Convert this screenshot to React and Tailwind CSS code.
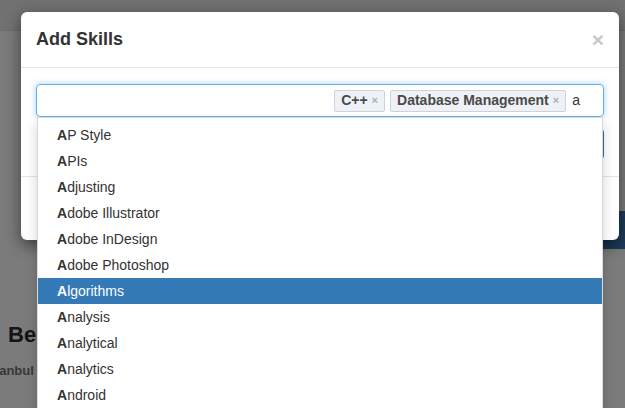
import { useState } from "react";

const skills = [
  "AP Style",
  "APIs",
  "Adjusting",
  "Adobe Illustrator",
  "Adobe InDesign",
  "Adobe Photoshop",
  "Algorithms",
  "Analysis",
  "Analytical",
  "Analytics",
  "Android",
  "Angular",
];

function Tag({ label }) {
  return (
    <span className="flex items-center h-[22px] px-[6px] gap-[4px] bg-[#eef1f5] border border-[#cdd4dd] rounded-[2px] text-[14px] font-bold text-[#4a4a4a]">
      {label}
      <span className="text-[11px] font-bold text-[#a9b0b8]">×</span>
    </span>
  );
}

export default function App() {
  const [active] = useState(6);

  return (
    <div className="relative w-[625px] h-[408px] overflow-hidden bg-[#f6f6f6] font-['Liberation_Sans',Arial,sans-serif]">
      {/* page behind the modal */}
      <div className="flex flex-col h-full">
        <div className="h-[31px] bg-[#e2e2e2] border-b border-[#d6d6d6]" />
        <div className="flex justify-end pt-[180px]">
          <div className="w-[130px] h-[38px] bg-[#3a76b2]" />
        </div>
        <div className="flex flex-col pl-[8px] pt-[72px]">
          <h2 className="text-[22px] font-bold text-[#2a2a2a] leading-[28px]">Berk Yılmaz</h2>
          <p className="ml-[-24px] mt-[12px] text-[13px] font-bold text-[#707070]">İstanbul</p>
        </div>
      </div>

      {/* backdrop */}
      <div className="absolute inset-0 bg-black/50" />

      {/* modal */}
      <div className="absolute left-[21px] top-[12px] w-[598px] h-[228px] flex flex-col bg-white rounded-[6px] shadow-[0_5px_15px_rgba(0,0,0,0.5)]">
        <div className="flex items-center justify-between h-[56px] px-[15px] border-b border-[#e5e5e5]">
          <h4 className="text-[18px] font-bold text-[#333]">Add Skills</h4>
          <span className="text-[21px] font-bold leading-none text-[#c8c8c8]">×</span>
        </div>
        <div className="flex flex-col gap-[12px] px-[15px] pt-[16px] h-[109px] border-b border-[#e5e5e5]">
          <div className="flex items-center justify-end gap-[5px] h-[33px] pr-[23px] border border-[#66afe9] rounded-[4px] shadow-[0_0_6px_rgba(102,175,233,0.6)]">
            <Tag label="C++" />
            <Tag label="Database Management" />
            <span className="text-[14px] text-[#333] ml-[1px]">a</span>
          </div>
          <div className="flex justify-end">
            <div className="w-[80px] h-[30px] rounded-[4px] bg-[#2e6da4]" />
          </div>
        </div>
        <div className="flex-1" />
      </div>

      {/* autocomplete dropdown */}
      <ul className="absolute left-[37px] top-[117px] w-[566px] pt-[4px] bg-white border border-black/15 shadow-[0_6px_12px_rgba(0,0,0,0.175)]">
        {skills.map((s, i) => (
          <li
            key={s}
            className={
              i === active
                ? "h-[26px] leading-[26px] px-[19px] text-[14px] bg-[#337ab7] text-white"
                : "h-[26px] leading-[26px] px-[19px] text-[14px] text-[#333]"
            }
          >
            <strong>{s[0]}</strong>
            {s.slice(1)}
          </li>
        ))}
      </ul>
    </div>
  );
}
